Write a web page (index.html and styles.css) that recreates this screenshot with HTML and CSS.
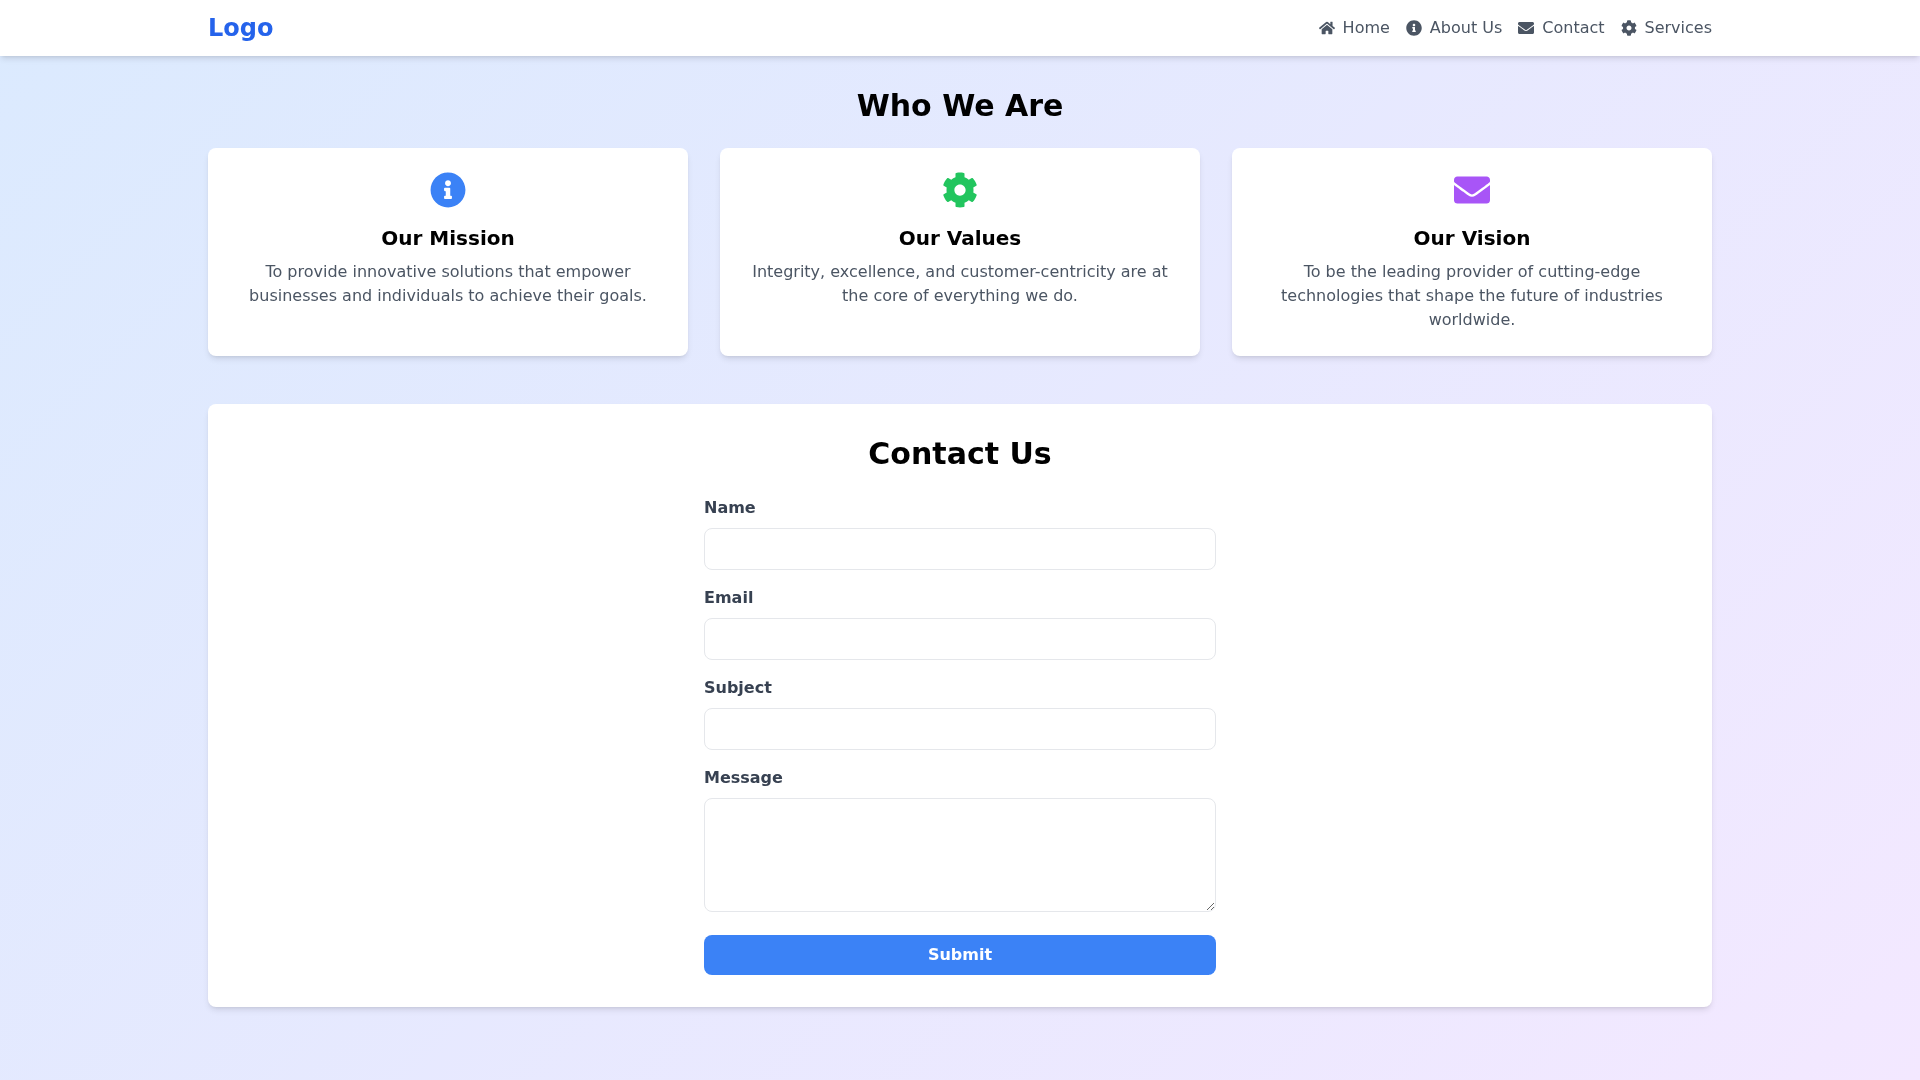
FILE: index.html
```html
<!DOCTYPE html>
<html lang="en">
<head>
  <meta charset="UTF-8" />
  <meta name="viewport" content="width=device-width, initial-scale=1.0"/>
  <title>Who We Are</title>
  <link rel="stylesheet" href="styles.css">
</head>
<body>

  <header class="navbar">
    <div class="container nav-inner">
      <a class="logo" href="#">Logo</a>
      <nav class="nav-links">
        <a href="#">
          <svg class="nav-icon" viewBox="0 0 576 512"><path d="M280.37 148.26L96 300.11V464a16 16 0 0 0 16 16l112.06-.29a16 16 0 0 0 15.92-16V368a16 16 0 0 1 16-16h64a16 16 0 0 1 16 16v95.64a16 16 0 0 0 16 16.05L464 480a16 16 0 0 0 16-16V300L295.67 148.26a12.19 12.19 0 0 0-15.3 0zM571.6 251.47L488 182.56V44.05a12 12 0 0 0-12-12h-56a12 12 0 0 0-12 12v72.61L318.47 43a48 48 0 0 0-61 0L4.34 251.47a12 12 0 0 0-1.6 16.9l25.5 31A12 12 0 0 0 45.15 301l235.22-193.74a12.19 12.19 0 0 1 15.3 0L530.9 301a12 12 0 0 0 16.9-1.6l25.5-31a12 12 0 0 0-1.7-16.93z"/></svg>
          Home
        </a>
        <a href="#">
          <svg class="nav-icon" viewBox="0 0 512 512"><path d="M256 8C119.043 8 8 119.083 8 256c0 136.997 111.043 248 248 248s248-111.003 248-248C504 119.083 392.957 8 256 8zm0 110c23.196 0 42 18.804 42 42s-18.804 42-42 42-42-18.804-42-42 18.804-42 42-42zm56 254c0 6.627-5.373 12-12 12h-88c-6.627 0-12-5.373-12-12v-24c0-6.627 5.373-12 12-12h12v-64h-12c-6.627 0-12-5.373-12-12v-24c0-6.627 5.373-12 12-12h64c6.627 0 12 5.373 12 12v100h12c6.627 0 12 5.373 12 12v24z"/></svg>
          About Us
        </a>
        <a href="#">
          <svg class="nav-icon" viewBox="0 0 512 512"><path d="M502.3 190.8c3.9-3.1 9.7-.2 9.7 4.7V400c0 26.5-21.5 48-48 48H48c-26.5 0-48-21.5-48-48V195.6c0-5 5.7-7.8 9.7-4.7 22.4 17.4 52.1 39.5 154.1 113.6 21.1 15.4 56.7 47.8 92.2 47.6 35.7.3 72-32.8 92.3-47.6 102-74.1 131.6-96.3 154-113.7zM256 320c23.2.4 56.6-29.2 73.4-41.4 132.7-96.3 142.8-104.7 173.4-128.7 5.8-4.5 9.2-11.5 9.2-18.9v-19c0-26.5-21.5-48-48-48H48C21.5 64 0 85.5 0 112v19c0 7.4 3.4 14.3 9.2 18.9 30.6 23.9 40.7 32.4 173.4 128.7 16.8 12.2 50.2 41.8 73.4 41.4z"/></svg>
          Contact
        </a>
        <a href="#">
          <svg class="nav-icon" viewBox="0 0 512 512"><path d="M487.4 315.7l-42.6-24.6c4.3-23.2 4.3-47 0-70.2l42.6-24.6c4.9-2.8 7.1-8.6 5.5-14-11.1-35.6-30-67.8-54.7-94.6-3.8-4.1-10-5.1-14.8-2.3L380.8 110c-17.9-15.4-38.5-27.3-60.8-35.1V25.8c0-5.6-3.9-10.5-9.4-11.7-36.7-8.2-74.3-7.8-109.2 0-5.5 1.2-9.4 6.1-9.4 11.7V75c-22.2 7.9-42.8 19.8-60.8 35.1L88.7 85.5c-4.9-2.8-11-1.9-14.8 2.3-24.7 26.7-43.6 58.9-54.7 94.6-1.7 5.4.6 11.2 5.5 14L67.3 221c-4.3 23.2-4.3 47 0 70.2l-42.6 24.6c-4.9 2.8-7.1 8.6-5.5 14 11.1 35.6 30 67.8 54.7 94.6 3.8 4.1 10 5.1 14.8 2.3l42.6-24.6c17.9 15.4 38.5 27.3 60.8 35.1v49.2c0 5.6 3.9 10.5 9.4 11.7 36.7 8.2 74.3 7.8 109.2 0 5.5-1.2 9.4-6.1 9.4-11.7v-49.2c22.2-7.9 42.8-19.8 60.8-35.1l42.6 24.6c4.9 2.8 11 1.9 14.8-2.3 24.7-26.7 43.6-58.9 54.7-94.6 1.5-5.5-.7-11.3-5.6-14.1zM256 336c-44.1 0-80-35.9-80-80s35.9-80 80-80 80 35.9 80 80-35.9 80-80 80z"/></svg>
          Services
        </a>
      </nav>
    </div>
  </header>

  <main class="container">
    <h2 class="section-title">Who We Are</h2>

    <section class="cards">
      <div class="card">
        <svg class="card-icon icon-blue" viewBox="0 0 512 512"><path d="M256 8C119.043 8 8 119.083 8 256c0 136.997 111.043 248 248 248s248-111.003 248-248C504 119.083 392.957 8 256 8zm0 110c23.196 0 42 18.804 42 42s-18.804 42-42 42-42-18.804-42-42 18.804-42 42-42zm56 254c0 6.627-5.373 12-12 12h-88c-6.627 0-12-5.373-12-12v-24c0-6.627 5.373-12 12-12h12v-64h-12c-6.627 0-12-5.373-12-12v-24c0-6.627 5.373-12 12-12h64c6.627 0 12 5.373 12 12v100h12c6.627 0 12 5.373 12 12v24z"/></svg>
        <h3>Our Mission</h3>
        <p>To provide innovative solutions that empower businesses and individuals to achieve their goals.</p>
      </div>
      <div class="card">
        <svg class="card-icon icon-green" viewBox="0 0 512 512"><path d="M487.4 315.7l-42.6-24.6c4.3-23.2 4.3-47 0-70.2l42.6-24.6c4.9-2.8 7.1-8.6 5.5-14-11.1-35.6-30-67.8-54.7-94.6-3.8-4.1-10-5.1-14.8-2.3L380.8 110c-17.9-15.4-38.5-27.3-60.8-35.1V25.8c0-5.6-3.9-10.5-9.4-11.7-36.7-8.2-74.3-7.8-109.2 0-5.5 1.2-9.4 6.1-9.4 11.7V75c-22.2 7.9-42.8 19.8-60.8 35.1L88.7 85.5c-4.9-2.8-11-1.9-14.8 2.3-24.7 26.7-43.6 58.9-54.7 94.6-1.7 5.4.6 11.2 5.5 14L67.3 221c-4.3 23.2-4.3 47 0 70.2l-42.6 24.6c-4.9 2.8-7.1 8.6-5.5 14 11.1 35.6 30 67.8 54.7 94.6 3.8 4.1 10 5.1 14.8 2.3l42.6-24.6c17.9 15.4 38.5 27.3 60.8 35.1v49.2c0 5.6 3.9 10.5 9.4 11.7 36.7 8.2 74.3 7.8 109.2 0 5.5-1.2 9.4-6.1 9.4-11.7v-49.2c22.2-7.9 42.8-19.8 60.8-35.1l42.6 24.6c4.9 2.8 11 1.9 14.8-2.3 24.7-26.7 43.6-58.9 54.7-94.6 1.5-5.5-.7-11.3-5.6-14.1zM256 336c-44.1 0-80-35.9-80-80s35.9-80 80-80 80 35.9 80 80-35.9 80-80 80z"/></svg>
        <h3>Our Values</h3>
        <p>Integrity, excellence, and customer-centricity are at the core of everything we do.</p>
      </div>
      <div class="card">
        <svg class="card-icon icon-purple" viewBox="0 0 512 512"><path d="M502.3 190.8c3.9-3.1 9.7-.2 9.7 4.7V400c0 26.5-21.5 48-48 48H48c-26.5 0-48-21.5-48-48V195.6c0-5 5.7-7.8 9.7-4.7 22.4 17.4 52.1 39.5 154.1 113.6 21.1 15.4 56.7 47.8 92.2 47.6 35.7.3 72-32.8 92.3-47.6 102-74.1 131.6-96.3 154-113.7zM256 320c23.2.4 56.6-29.2 73.4-41.4 132.7-96.3 142.8-104.7 173.4-128.7 5.8-4.5 9.2-11.5 9.2-18.9v-19c0-26.5-21.5-48-48-48H48C21.5 64 0 85.5 0 112v19c0 7.4 3.4 14.3 9.2 18.9 30.6 23.9 40.7 32.4 173.4 128.7 16.8 12.2 50.2 41.8 73.4 41.4z"/></svg>
        <h3>Our Vision</h3>
        <p>To be the leading provider of cutting-edge technologies that shape the future of industries worldwide.</p>
      </div>
    </section>

    <section class="contact">
      <h2 class="contact-title">Contact Us</h2>
      <form class="contact-form">
        <div class="field">
          <label for="name">Name</label>
          <input type="text" id="name" />
        </div>
        <div class="field">
          <label for="email">Email</label>
          <input type="email" id="email" />
        </div>
        <div class="field">
          <label for="subject">Subject</label>
          <input type="text" id="subject" />
        </div>
        <div class="field">
          <label for="message">Message</label>
          <textarea id="message" rows="4"></textarea>
        </div>
        <button type="submit" class="submit">Submit</button>
      </form>
    </section>
  </main>

</body>
</html>
```

FILE: styles.css
```css
* {
  margin: 0;
  padding: 0;
  box-sizing: border-box;
}

body {
  font-family: 'DejaVu Sans', sans-serif;
  font-size: 16px;
  line-height: 24px;
  background: linear-gradient(135deg, #dbeafe, #f3e8ff);
  color: #000;
  min-height: 100vh;
}

.container {
  width: 100%;
  max-width: 1536px;
  margin: 0 auto;
  padding: 0 16px;
}

.navbar {
  background-color: #fff;
  box-shadow: 0 4px 6px -1px rgba(0, 0, 0, 0.1), 0 2px 4px -2px rgba(0, 0, 0, 0.1);
  will-change: transform;
}

main {
  will-change: transform;
}

.nav-inner {
  display: flex;
  align-items: center;
  justify-content: space-between;
  height: 56px;
}

.logo {
  font-size: 24px;
  line-height: 32px;
  font-weight: 700;
  color: #2563eb;
  text-decoration: none;
}

.nav-links {
  display: flex;
  gap: 16px;
}

.nav-links a {
  display: flex;
  align-items: center;
  gap: 8px;
  color: #4b5563;
  text-decoration: none;
}

.nav-icon {
  width: 16px;
  height: 16px;
  fill: currentColor;
}

.section-title {
  font-size: 30px;
  line-height: 36px;
  font-weight: 700;
  text-align: center;
  margin-top: 32px;
  margin-bottom: 24px;
}

.cards {
  display: grid;
  grid-template-columns: repeat(3, 1fr);
  gap: 32px;
  margin-bottom: 48px;
}

.card {
  background-color: #fff;
  border-radius: 8px;
  padding: 24px;
  text-align: center;
  box-shadow: 0 4px 6px -1px rgba(0, 0, 0, 0.1), 0 2px 4px -2px rgba(0, 0, 0, 0.1);
}

.card-icon {
  display: block;
  height: 36px;
  margin: 0 auto 16px;
  fill: currentColor;
}

.icon-blue { color: #3b82f6; }
.icon-green { color: #22c55e; }
.icon-purple { color: #a855f7; }

.card h3 {
  font-size: 20px;
  line-height: 28px;
  font-weight: 700;
  margin-bottom: 8px;
}

.card p {
  color: #4b5563;
}

.contact {
  background-color: #fff;
  border-radius: 8px;
  padding: 32px;
  box-shadow: 0 4px 6px -1px rgba(0, 0, 0, 0.1), 0 2px 4px -2px rgba(0, 0, 0, 0.1);
  margin-bottom: 32px;
}

.contact-title {
  font-size: 30px;
  line-height: 36px;
  font-weight: 700;
  text-align: center;
  margin-bottom: 24px;
}

.contact-form {
  max-width: 512px;
  margin: 0 auto;
}

.field {
  margin-bottom: 16px;
}

.field label {
  display: block;
  font-weight: 700;
  color: #374151;
  margin-bottom: 8px;
}

.field input,
.field textarea {
  width: 100%;
  padding: 8px 16px;
  border: 1px solid #e5e7eb;
  border-radius: 8px;
  font-family: inherit;
  font-size: 16px;
  line-height: 24px;
  color: #374151;
  background-color: #fff;
}

.submit {
  display: block;
  width: 100%;
  padding: 8px 16px;
  border: none;
  border-radius: 8px;
  background-color: #3b82f6;
  color: #fff;
  font-family: inherit;
  font-size: 16px;
  line-height: 24px;
  font-weight: 700;
  cursor: pointer;
}
```
